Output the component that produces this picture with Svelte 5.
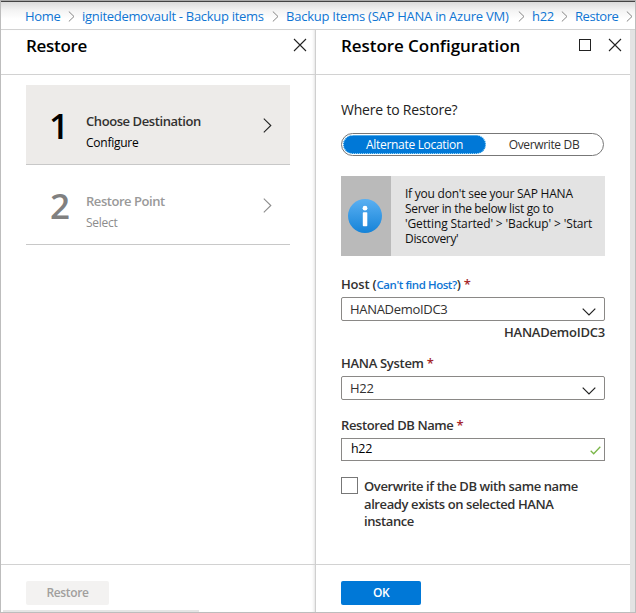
<script>
  const crumbs = [
    { text: 'Home', cls: 'c-home' },
    { text: 'ignitedemovault - Backup items', cls: 'c-vault' },
    { text: 'Backup Items (SAP HANA in Azure VM)', cls: 'c-items' },
    { text: 'h22', cls: 'c-db' },
    { text: 'Restore', cls: 'c-restore' }
  ];
  const steps = [
    { n: 1, title: 'Choose Destination', sub: 'Configure', active: true },
    { n: 2, title: 'Restore Point', sub: 'Select', active: false }
  ];
</script>

{#snippet closeIcon()}
  <svg width="14" height="14" viewBox="0 0 14 14"><path d="M1 1L13 13M13 1L1 13" fill="none" stroke="#222" stroke-width="1.1" /></svg>
{/snippet}

{#snippet downIcon()}
  <svg class="down" width="14" height="8" viewBox="0 0 14 8"><path d="M.7 .7L7 7L13.3 .7" fill="none" stroke="#222" stroke-width="1.2" /></svg>
{/snippet}

<div class="window">
  <nav>
    {#each crumbs as c}
      <div class="crumb {c.cls}">
        <a href="#top"><span>{c.text}</span></a>
        <svg width="7" height="11" viewBox="0 0 7 11"><path d="M.8 .5L6 5.5L.8 10.5" fill="none" stroke="#858585" stroke-width="1" /></svg>
      </div>
    {/each}
  </nav>
  <div class="blades">
    <section class="left">
      <header><h2 class="t1">Restore</h2>{@render closeIcon()}</header>
      <div class="body">
        {#each steps as s}
          <div class="step" class:active={s.active}>
            <div class="num">{s.n}</div>
            <div class="info">
              <div class="title">{s.title}</div>
              <div class="sub">{s.sub}</div>
            </div>
            <svg width="9" height="15" viewBox="0 0 9 15"><path d="M.8 .7L7.8 7.5L.8 14.3" fill="none" stroke="currentColor" stroke-width="1.1" /></svg>
          </div>
        {/each}
      </div>
      <footer><button class="disabled">Restore</button></footer>
      <div class="hscroll"></div>
    </section>
    <section class="right">
      <header>
        <h2 class="t2">Restore Configuration</h2>
        <div class="tools">
          <svg width="12" height="12" viewBox="0 0 12 12"><rect x=".5" y=".5" width="11" height="11" fill="none" stroke="#222" /></svg>
          {@render closeIcon()}
        </div>
      </header>
      <div class="body">
        <div class="question">Where to Restore?</div>
        <div class="toggle">
          <div class="opt on">Alternate Location</div>
          <div class="opt off">Overwrite DB</div>
        </div>
        <div class="notice">
          <div class="badge">
            <svg width="34" height="34" viewBox="0 0 34 34">
              <defs><linearGradient id="blue" x1="0" y1="0" x2="0" y2="1"><stop offset="0" stop-color="#5ab0f2" /><stop offset="1" stop-color="#1583d8" /></linearGradient></defs>
              <circle cx="17" cy="17" r="17" fill="url(#blue)" />
              <circle cx="17" cy="9.2" r="2.4" fill="#fff" />
              <rect x="14.8" y="13.2" width="4.5" height="14" rx=".8" fill="#fff" />
            </svg>
          </div>
          <p><span class="n1">If you don't see your SAP HANA</span><br />Server in the below list go to<br /><span class="n3">'Getting Started' &gt; 'Backup' &gt; 'Start</span><br />Discovery'</p>
        </div>
        <div class="label host">Host (<a href="#host">Can't find Host?</a>) <b>*</b></div>
        <div class="select"><span class="v1">HANADemoIDC3</span>{@render downIcon()}</div>
        <div class="selected">HANADemoIDC3</div>
        <div class="label system">HANA System <b>*</b></div>
        <div class="select"><span>H22</span>{@render downIcon()}</div>
        <div class="label dbname">Restored DB Name <b>*</b></div>
        <div class="input"><span>h22</span><svg width="11" height="9" viewBox="0 0 11 9"><path d="M.7 4.7L3.7 7.7L10.3 .8" fill="none" stroke="#7ab648" stroke-width="1.3" /></svg></div>
        <div class="check">
          <div class="box"></div>
          <p><span class="k1">Overwrite if the DB with same name</span><br /><span class="k2">already exists on selected HANA</span><br /><span>instance</span></p>
        </div>
      </div>
      <footer><button class="ok">OK</button></footer>
    </section>
    <div class="vscroll"></div>
  </div>
</div>

<style>
  :global(body) { background: #fff; }
  .window {
    box-sizing: border-box; width: 636px; height: 613px; overflow: hidden;
    display: flex; flex-direction: column;
    border: 1px solid #bdbdbd; border-top-color: #a9a9a9;
    font-family: "Open Sans", "Noto Sans", sans-serif; font-size: 13px; color: #323130;
    white-space: nowrap; letter-spacing: -0.3px;
  }
  a { color: #0f75d3; text-decoration: none; }
  svg { display: block; flex: none; }
  nav {
    box-sizing: border-box; height: 29px; flex: none; display: flex; align-items: flex-start;
    padding: 5px 0 0 24px; border-top: 1px solid #444; border-bottom: 1px solid #d2d2d2;
    background: linear-gradient(#dcdcdc, #f3f3f3 8px, #fff 17px);
  }
  .crumb { flex: none; display: flex; justify-content: space-between; padding-right: 7px; box-sizing: border-box; height: 19px; line-height: 19px; }
  .crumb svg { margin-top: 4px; }
  .c-home { width: 57px; }
  .c-vault { width: 204px; }
  .c-items { width: 246px; letter-spacing: -0.24px; }
  .c-db { width: 43px; }
  .c-restore { width: 58px; padding-right: 0; letter-spacing: -0.45px; }
  .blades { flex: 1; display: flex; min-height: 0; }
  section { box-sizing: border-box; display: flex; flex-direction: column; }
  .left { width: 315px; border-right: 1px solid #cfcfcf; box-shadow: inset -3px 0 3px -2px #e2e2e2; }
  .right { width: 314px; }
  .vscroll { width: 5px; background: #e3e3e3; }
  header {
    box-sizing: border-box; height: 45px; flex: none; display: flex; justify-content: space-between; align-items: flex-start;
    padding: 8px 8px 0 25px; border-bottom: 1px solid #d2d2d2;
  }
  h2 { margin: -4px 0 0; font-size: 17px; line-height: 24px; font-weight: 600; color: #000; }
  .t2 { letter-spacing: -0.06px; }
  .tools { display: flex; align-items: center; gap: 17px; }
  .left .body { flex: 1; padding: 10px 25px 0; }
  .step {
    box-sizing: border-box; height: 80px; display: flex; align-items: flex-start;
    border-bottom: 1px solid #c8c8c8; color: #8c8c8c;
  }
  .step.active { background: #edebe9; color: #222; }
  .num { width: 60px; box-sizing: border-box; padding-left: 24px; line-height: 40px; padding-top: 21px; font-size: 35px; font-weight: 600; letter-spacing: 0; color: #808080; }
  .active .num { color: #000; padding-left: 23px; }
  .info { width: 177px; padding-top: 26px; }
  .title { line-height: 20px; font-weight: 600; color: #999; letter-spacing: -0.45px; }
  .active .title { color: #323130; letter-spacing: -0.42px; }
  .sub { font-size: 12px; line-height: 22px; padding-top: 1px; letter-spacing: -0.25px; }
  .active .sub { color: #000; }
  .step svg { margin-top: 33px; }
  footer { box-sizing: border-box; height: 48px; flex: none; border-top: 1px solid #d2d2d2; padding: 16px 25px 0; }
  .left footer { height: 46px; }
  button { display: block; height: 24px; padding: 0; border: 0; border-radius: 2px; font: 600 12px/24px "Open Sans", sans-serif; }
  .disabled { width: 83px; background: #f3f2f1; color: #a19f9d; letter-spacing: -0.35px; }
  .ok { width: 80px; background: #0078d7; color: #fff; letter-spacing: -0.6px; }
  .hscroll { width: 196px; height: 2px; margin-left: 2px; background: #e5e5e5; }
  .right .body { flex: 1; padding: 24px 25px 0; }
  .question { height: 22px; line-height: 22px; font-size: 14px; color: #222; letter-spacing: -0.2px; }
  .toggle {
    box-sizing: border-box; width: 263px; height: 23px; margin-top: 12px; padding: 1px; display: flex;
    border: 1px solid #777; border-radius: 12px; font-size: 12px; line-height: 19px; text-align: center; letter-spacing: -0.3px;
  }
  .opt { box-sizing: border-box; }
  .on { width: 143px; line-height: 17px; border: 1px dotted #9fe0ff; border-radius: 10px; background: #0078d7; color: #fff; }
  .off { flex: 1; letter-spacing: -0.35px; }
  .notice { display: flex; width: 264px; height: 80px; margin-top: 20px; background: #e3e3e3; color: #111; }
  .badge { box-sizing: border-box; width: 50px; padding-right: 2px; display: flex; align-items: center; justify-content: center; background: #bababa; }
  .notice p { margin: 10px 0 0 14px; font-size: 12px; line-height: 15px; letter-spacing: -0.33px; }
  .n1 { letter-spacing: -0.23px; }
  .n3 { letter-spacing: -0.13px; }
  .label { height: 20px; line-height: 20px; font-weight: 600; }
  .label a { font-size: 11.5px; letter-spacing: -0.45px; }
  .label b { color: #a4262c; font-weight: 600; }
  .host { margin-top: 18px; letter-spacing: -0.2px; }
  .host + .select { margin-top: 3px; }
  .system { margin-top: 10px; }
  .system + .select { margin-top: 3px; }
  .dbname { margin-top: 15px; letter-spacing: -0.4px; }
  .select, .input {
    box-sizing: border-box; width: 264px; height: 24px; border: 1px solid #8a8886; border-radius: 2px;
    display: flex; justify-content: space-between; padding: 0 8px; line-height: 23px;
  }
  .down { margin-top: 10px; }
  .input { height: 23px; margin-top: 3px; border-radius: 0; padding: 0 3px 0 9px; color: #000; line-height: 20px; font-size: 12.5px; }
  .input svg { margin-top: 7px; }
  .selected { width: 264px; margin-top: 1px; height: 21px; line-height: 21px; text-align: right; font-weight: 600; letter-spacing: -0.22px; }
  .check { display: flex; margin-top: 16px; }
  .box { box-sizing: border-box; width: 17px; height: 17px; border: 1px solid #777; }
  .check p { margin: 1px 0 0 6px; line-height: 17.5px; font-weight: 600; letter-spacing: -0.4px; }
</style>
